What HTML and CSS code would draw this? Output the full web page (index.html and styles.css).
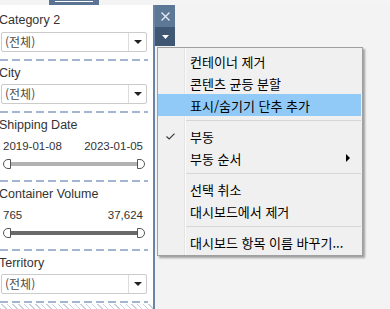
FILE: index.html
```html
<!DOCTYPE html>
<html lang="ko">
<head>
    <meta charset="UTF-8">
    <meta name="viewport" content="width=device-width, initial-scale=1.0">
    <title>대시보드 필터</title>
    <link rel="stylesheet" href="styles.css">
</head>
<body>
    <div class="screen">
        <div class="topbar"><div class="tab"></div></div>

        <div class="workspace">
            <div class="filters">
                <div class="filter-title">Category 2</div>
                <div class="select"><span class="select-value">(전체)</span><span class="select-arrow"></span></div>
                <div class="dash"></div>

                <div class="filter-title">City</div>
                <div class="select"><span class="select-value">(전체)</span><span class="select-arrow"></span></div>
                <div class="dash"></div>

                <div class="filter-title">Shipping Date</div>
                <div class="range-values"><span>2019-01-08</span><span>2023-01-05</span></div>
                <div class="slider">
                    <span class="handle handle-min"></span><span class="track"></span><span class="handle handle-max"></span>
                </div>
                <div class="dash dash-after-slider"></div>

                <div class="filter-title">Container Volume</div>
                <div class="range-values"><span>765</span><span>37,624</span></div>
                <div class="slider">
                    <span class="handle handle-min"></span><span class="track track-dark"></span><span class="handle handle-max"></span>
                </div>
                <div class="dash dash-after-slider"></div>

                <div class="filter-title">Territory</div>
                <div class="select"><span class="select-value">(전체)</span><span class="select-arrow"></span></div>
                <div class="dash"></div>

                <div class="filters-end"></div>
            </div>

            <div class="zone-tools">
                <div class="tool tool-close">
                    <svg width="9" height="9" viewBox="0 0 9 9"><path d="M0.5 0.5 L8.5 8.5 M8.5 0.5 L0.5 8.5" stroke="#e4eaf1" stroke-width="1.4" fill="none"/></svg>
                </div>
                <div class="tool tool-more">
                    <svg width="7" height="4" viewBox="0 0 7 4"><path d="M0 0 H7 L3.5 4 Z" fill="#ffffff"/></svg>
                </div>
            </div>
        </div>

        <ul class="context-menu">
            <li><span class="mark"></span><span class="label">컨테이너 제거</span></li>
            <li><span class="mark"></span><span class="label">콘텐츠 균등 분할</span></li>
            <li class="active"><span class="mark"></span><span class="label">표시/숨기기 단추 추가</span></li>
            <li class="sep"></li>
            <li>
                <span class="mark">
                    <svg width="9" height="7" viewBox="0 0 9 7"><path d="M0.5 3.5 L3.2 6 L8.5 0.7" stroke="#3a3a3a" stroke-width="1.2" fill="none"/></svg>
                </span>
                <span class="label">부동</span>
            </li>
            <li><span class="mark"></span><span class="label">부동 순서</span><span class="sub-arrow"></span></li>
            <li class="sep"></li>
            <li><span class="mark"></span><span class="label">선택 취소</span></li>
            <li><span class="mark"></span><span class="label">대시보드에서 제거</span></li>
            <li class="sep"></li>
            <li><span class="mark"></span><span class="label">대시보드 항목 이름 바꾸기...</span></li>
        </ul>
    </div>
</body>
</html>
```

FILE: styles.css
```css
body {
    margin: 0;
    background-color: #f3f3f3;
    font-family: "Liberation Sans", Arial, sans-serif;
}

.screen {
    position: relative;
    width: 390px;
    height: 309px;
    overflow: hidden;
}

.topbar {
    height: 5px;
    background-color: #f4f4f4;
}

.tab {
    margin-left: 49px;
    width: 50px;
    height: 5px;
    padding: 1px 6px 0;
    box-sizing: border-box;
    background-color: #5b7494;
}

.tab::after {
    content: "";
    display: block;
    height: 1px;
    background-color: #fff;
}

.workspace {
    display: flex;
    height: 304px;
}

.filters {
    width: 153px;
    padding-top: 3px;
    background-color: #fff;
    border-right: 2px solid #6984a7;
    display: flex;
    flex-direction: column;
}

.filter-title {
    margin: 4px 0 0 -1px;
    font-size: 12.5px;
    line-height: 16px;
    color: #333;
}

.select {
    display: flex;
    height: 20px;
    margin: 3px 6px 0 1px;
    box-sizing: border-box;
    border: 1px solid #cbcbcb;
    border-radius: 2px;
}

.filter-title:first-child + .select {
    margin-top: 4px;
}

.select-value {
    flex: 1;
    padding-left: 3px;
    font-family: "Noto Sans CJK KR", sans-serif;
    font-size: 12px;
    line-height: 18px;
    color: #4a4a4a;
}

.select-arrow {
    width: 17px;
    border-left: 1px solid #dcdcdc;
    display: flex;
    align-items: center;
    justify-content: center;
}

.select-arrow::after {
    content: "";
    border-left: 4px solid transparent;
    border-right: 4px solid transparent;
    border-top: 4px solid #222;
}

.dash {
    height: 2px;
    margin: 7px 5px 0 0;
    background: repeating-linear-gradient(90deg, #a3b5d1 0 8px, transparent 8px 12px);
}

.dash-after-slider {
    margin-top: 11px;
}

.range-values {
    display: flex;
    justify-content: space-between;
    margin: 5px 10px 0 3px;
    font-size: 11.5px;
    line-height: 16px;
    color: #333;
}

.slider {
    display: flex;
    align-items: center;
    height: 10px;
    margin: 5px 8px 0 3px;
}

.handle {
    width: 8px;
    height: 10px;
    box-sizing: border-box;
    border: 1px solid #555;
    background-color: #fff;
}

.handle-min {
    border-radius: 5px 0 0 5px;
}

.handle-max {
    border-radius: 0 5px 5px 0;
}

.track {
    flex: 1;
    height: 4px;
    background-color: #b2b2b2;
}

.track-dark {
    background-color: #6a6a6a;
}

.filters-end {
    flex: 1;
    margin-top: 1px;
    background: repeating-linear-gradient(45deg, #c9d1dd 0 1px, transparent 1px 4px);
}

.zone-tools {
    width: 20px;
    display: flex;
    flex-direction: column;
}

.tool {
    display: flex;
    align-items: center;
    justify-content: center;
}

.tool-close {
    height: 22px;
    background-color: #5d7797;
}

.tool-more {
    height: 19px;
    background-color: #3f5773;
}

.context-menu {
    position: absolute;
    left: 157px;
    top: 47px;
    width: 206px;
    margin: 0;
    padding: 2px 1px 2px 0;
    box-sizing: border-box;
    list-style: none;
    border: 1px solid #a0a0a0;
    background: linear-gradient(90deg, #f0f0f0 0 26px, #e4e4e4 26px 27px, #fbfbfb 27px 28px, #f0f0f0 28px);
    box-shadow: 2px 2px 2px rgba(0, 0, 0, 0.35);
    font-family: "Noto Sans CJK KR", sans-serif;
    font-size: 13px;
    color: #000;
}

.context-menu li {
    display: flex;
    align-items: center;
    height: 22px;
}

.context-menu li.active {
    background-color: #91c9f7;
}

.context-menu li.sep {
    height: 1px;
    margin: 4px 0 4px 28px;
    background-color: #d6d6d6;
}

.mark {
    width: 32px;
    padding-left: 8px;
    box-sizing: border-box;
    display: flex;
    align-items: center;
}

.label {
    flex: 1;
    white-space: nowrap;
}

.sub-arrow {
    margin-right: 11px;
    border-left: 4px solid #000;
    border-top: 4px solid transparent;
    border-bottom: 4px solid transparent;
}
```
